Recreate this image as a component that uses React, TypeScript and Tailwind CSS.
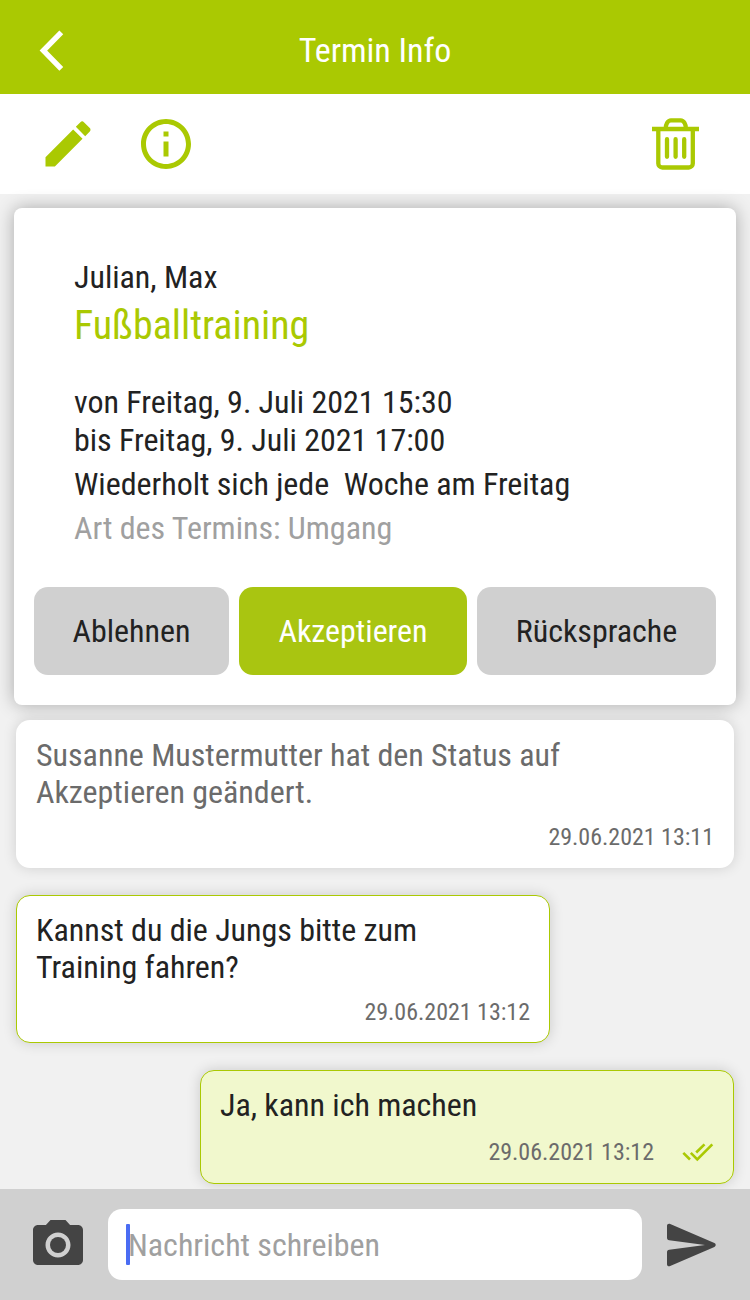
import type { ReactNode } from 'react';

const FONT = "font-['Roboto_Condensed','Roboto',sans-serif] [font-stretch:75%] tracking-[-0.02px]";

function Message({ children, time, className, read }: { children: ReactNode; time: string; className: string; read?: boolean }) {
  return (
    <article className={`flex shrink-0 flex-col rounded-[14px] ${className}`}>
      <p className="text-[32px] leading-[37px]">{children}</p>
      <div className={`flex items-center justify-end text-[24px] leading-[28px] text-[#6b6b6b] ${read ? 'mt-[14px]' : 'mt-[12px]'}`}>
        <time className="whitespace-nowrap">{time}</time>
        {read && (
          <svg className="ml-[28px] h-[20px] w-[32px]" viewBox="0 0 32 20" fill="none" stroke="#aac902" strokeWidth="2.6">
            <path d="M1.3 10.8 8 17.5M8.8 10.8 15.3 17.3 30.3 2.3M14.2 10.5 22.5 2.3" />
          </svg>
        )}
      </div>
    </article>
  );
}

function Action({ label, className }: { label: string; className: string }) {
  return (
    <button className={`h-[88px] rounded-[14px] text-[32px] leading-[38px] whitespace-nowrap ${className}`}>{label}</button>
  );
}

export default function App() {
  return (
    <main className={`flex h-[1300px] w-[750px] flex-col overflow-hidden bg-[#f1f1f1] text-[#222] ${FONT}`}>
      <header className="grid h-[94px] shrink-0 grid-cols-[100px_1fr_100px] items-center bg-[#aac902] text-white">
        <button aria-label="Zurück" className="pl-[39px] pt-[7px]">
          <svg width="26" height="42" viewBox="0 0 26 42" fill="none" stroke="currentColor" strokeWidth="5.4">
            <path d="M22.3 2.3 4.4 20.6 22.3 38.9" />
          </svg>
        </button>
        <h1 className="pt-[6px] text-center text-[34px] leading-[40px]">Termin Info</h1>
      </header>
      <nav className="flex h-[100px] shrink-0 items-center bg-white text-[#aac902]">
        <svg className="ml-[38px]" width="60" height="60" viewBox="0 0 24 24" fill="currentColor">
          <path d="M3 17.25V21h3.75L17.81 9.94l-3.75-3.75zM20.71 7.04c.39-.39.39-1.02 0-1.41l-2.34-2.34a.9959.9959 0 0 0-1.41 0l-1.83 1.83 3.75 3.75z" />
        </svg>
        <svg className="ml-[38px]" width="60" height="60" viewBox="0 0 24 24" fill="currentColor">
          <path d="M11 7h2v2h-2zm0 4h2v6h-2zm1-9C6.48 2 2 6.48 2 12s4.48 10 10 10 10-4.48 10-10S17.52 2 12 2zm0 18c-4.41 0-8-3.59-8-8s3.59-8 8-8 8 3.59 8 8-3.59 8-8 8z" />
        </svg>
        <svg className="ml-auto mr-[50px]" width="50" height="54" viewBox="0 0 50 54" fill="none" stroke="currentColor" strokeWidth="4.3">
          <path d="M2 12h47M15.6 12c0-5 2.2-8.7 5.4-8.7h9.6c3.2 0 5.4 3.7 5.4 8.7M8.3 12v34.5a4 4 0 0 0 4 4h26.5a4 4 0 0 0 4-4V12" />
          <path d="M17 22.2v17.6M25.6 22.2v17.6M34.2 22.2v17.6" strokeLinecap="round" />
        </svg>
      </nav>
      <section className="mx-[14px] mt-[14px] flex h-[497px] shrink-0 flex-col rounded-[8px] bg-white px-[20px] pt-[50px] text-[32px] leading-[38px] shadow-[0_0_18px_rgba(0,0,0,0.3)]">
        <div className="flex flex-col pl-[40px]">
          <p>Julian, Max</p>
          <h2 className="mt-[6px] text-[40px] leading-[47px] text-[#aac902]">Fußballtraining</h2>
          <p className="mt-[34px]">von Freitag, 9. Juli 2021 15:30</p>
          <p>bis Freitag, 9. Juli 2021 17:00</p>
          <p className="mt-[6px] whitespace-pre">{'Wiederholt sich jede  Woche am Freitag'}</p>
          <p className="mt-[6px] text-[#a0a0a0]">Art des Termins: Umgang</p>
        </div>
        <div className="mt-[40px] grid grid-cols-[195px_228px_239px] gap-[10px]">
          <Action label="Ablehnen" className="bg-[#d0d0d0]" />
          <Action label="Akzeptieren" className="bg-[#a9c511] text-white" />
          <Action label="Rücksprache" className="bg-[#d0d0d0]" />
        </div>
      </section>
      <section className="flex flex-col px-[16px] pt-[15px]">
        <Message time="29.06.2021 13:11" className="h-[148px] bg-white px-[20px] pt-[17px] text-[#6b6b6b] shadow-[0_0_14px_rgba(0,0,0,0.14)]">
          Susanne Mustermutter hat den Status auf<br />Akzeptieren geändert.
        </Message>
        <Message time="29.06.2021 13:12" className="mt-[27px] h-[148px] w-[534px] border border-[#aac902] bg-white px-[19px] pt-[16px] shadow-[0_0_14px_rgba(0,0,0,0.16)]">
          Kannst du die Jungs bitte zum<br />Training fahren?
        </Message>
        <Message read time="29.06.2021 13:12" className="mt-[27px] h-[114px] w-[534px] self-end border border-[#aac902] bg-[#f1f8cd] px-[19px] pt-[16px] shadow-[0_0_14px_rgba(0,0,0,0.16)]">
          Ja, kann ich machen
        </Message>
      </section>
      <footer className="relative mt-auto flex h-[111px] shrink-0 items-center bg-[#d0d0d0] text-[#444]">
        <svg className="ml-[28px] mt-[1px]" width="60" height="60" viewBox="0 0 24 24" fill="currentColor">
          <circle cx="12" cy="12" r="3.2" />
          <path d="M9 2 7.17 4H4c-1.1 0-2 .9-2 2v12c0 1.1.9 2 2 2h16c1.1 0 2-.9 2-2V6c0-1.1-.9-2-2-2h-3.17L15 2zm3 15c-2.76 0-5-2.24-5-5s2.24-5 5-5 5 2.24 5 5-2.24 5-5 5z" />
        </svg>
        <div className="ml-[20px] flex h-[71px] w-[534px] items-center rounded-[14px] bg-white pl-[18px]">
          <span className="z-10 h-[41px] w-[4px] rounded-[1px] bg-[#4a6cf3]" />
          <span className="-ml-[2px] text-[32px] leading-[38px] text-[#a0a0a0]">Nachricht schreiben</span>
        </div>
        <svg className="ml-[25px]" width="50" height="44" viewBox="0 0 50 44" fill="currentColor">
          <path d="M0 2.8C0 1 1.6.2 3.2.9L47.4 20.1c1.8.9 1.8 3 0 3.9L3.2 43.1C1.6 43.8 0 43 0 41.2V29.2c0-1.6.8-2.3 2.2-2.5L38 22 2.2 17.3C.8 17.1 0 16.4 0 14.8z" />
        </svg>
      </footer>
    </main>
  );
}
